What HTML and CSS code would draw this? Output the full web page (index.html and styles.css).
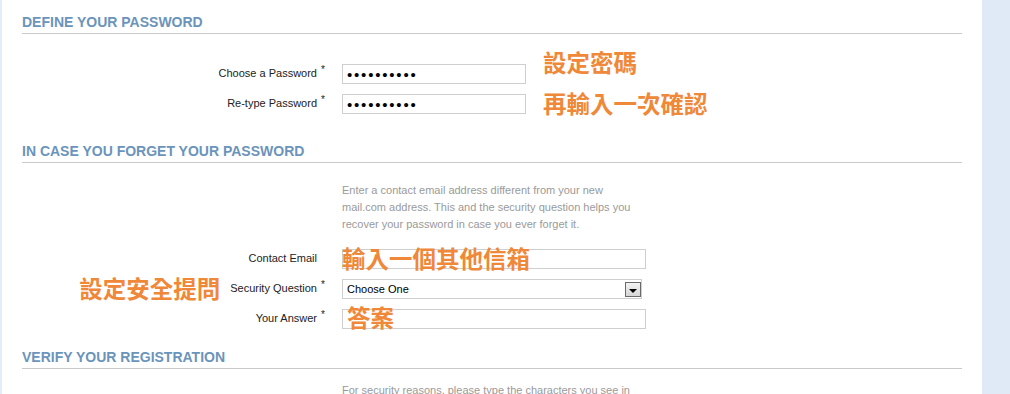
FILE: index.html
```html
<!DOCTYPE html>
<html lang="zh-Hant">
<head>
    <meta charset="UTF-8">
    <meta name="viewport" content="width=device-width, initial-scale=1.0">
    <title>Registration</title>
    <link rel="stylesheet" href="styles.css">
</head>
<body>
    <div class="page">
        <div class="edge"></div>
        <div class="main">
            <section class="block block-pw">
                <h2 class="block-title">DEFINE YOUR PASSWORD</h2>
                <div class="fields">
                    <div class="field">
                        <label class="field-label"><span>Choose a Password</span><span class="req">*</span></label>
                        <div class="control">
                            <input type="password" class="text text-short" value="abcdefghij">
                            <span class="note note-pw1">設定密碼</span>
                        </div>
                    </div>
                    <div class="field">
                        <label class="field-label"><span>Re-type Password</span><span class="req">*</span></label>
                        <div class="control">
                            <input type="password" class="text text-short" value="abcdefghij">
                            <span class="note note-pw2">再輸入一次確認</span>
                        </div>
                    </div>
                </div>
            </section>

            <section class="block block-recover">
                <h2 class="block-title">IN CASE YOU FORGET YOUR PASSWORD</h2>
                <p class="help">Enter a contact email address different from your new mail.com address. This and the security question helps you recover your password in case you ever forget it.</p>
                <div class="fields">
                    <div class="field">
                        <label class="field-label"><span>Contact Email</span><span class="req"></span></label>
                        <div class="control">
                            <input type="text" class="text text-long">
                            <span class="note note-in">輸入一個其他信箱</span>
                        </div>
                    </div>
                    <div class="field">
                        <label class="field-label"><span class="note-side">設定安全提問</span><span>Security Question</span><span class="req">*</span></label>
                        <div class="control">
                            <select class="choose">
                                <option>Choose One</option>
                            </select>
                            <span class="choose-btn"><i class="tri"></i></span>
                        </div>
                    </div>
                    <div class="field">
                        <label class="field-label"><span>Your Answer</span><span class="req">*</span></label>
                        <div class="control">
                            <input type="text" class="text text-long">
                            <span class="note note-in note-answer">答案</span>
                        </div>
                    </div>
                </div>
            </section>

            <section class="block block-verify">
                <h2 class="block-title">VERIFY YOUR REGISTRATION</h2>
                <p class="help help-verify">For security reasons, please type the characters you see in the picture below.</p>
            </section>
        </div>
        <div class="side"></div>
    </div>
</body>
</html>
```

FILE: styles.css
```css
body {
    margin: 0;
    font-family: 'Liberation Sans', Arial, sans-serif;
    background: #fff;
    color: #222;
}
.page {
    display: flex;
    height: 394px;
    overflow: hidden;
}
.edge {
    width: 2px;
    background: #e4edf7;
}
.side {
    width: 28px;
    background: #e0eaf6;
}
.main {
    flex: 1;
    padding: 0 20px 0 20px;
}
.block-pw {
    margin-bottom: 15px;
}
.block-recover {
    margin-bottom: 6px;
}
.block-title {
    margin: 0;
    padding: 14px 0 2px;
    font-size: 14px;
    line-height: 17px;
    font-weight: bold;
    color: #6b94bb;
    border-bottom: 1px solid #c9c9c9;
}
.fields {
    display: flex;
    flex-direction: column;
    gap: 10px;
}
.block-pw .fields {
    padding-top: 30px;
}
.field {
    display: grid;
    grid-template-columns: 304px 1fr;
    column-gap: 16px;
    align-items: center;
    height: 20px;
}
.field-label {
    display: flex;
    justify-content: flex-end;
    align-items: center;
    box-sizing: border-box;
    height: 20px;
    padding-bottom: 3px;
    font-size: 11px;
    color: #222;
}
.req {
    align-self: flex-start;
    width: 9px;
    padding-left: 4px;
    box-sizing: border-box;
    font-size: 10px;
    line-height: 11px;
    color: #222;
}
.control {
    position: relative;
    display: flex;
    align-items: center;
    height: 20px;
}
.text {
    box-sizing: border-box;
    height: 20px;
    margin: 0;
    padding: 0 4px;
    border: 1px solid #cfcfcf;
    background: #fff;
    font-family: 'Liberation Sans', Arial, sans-serif;
    font-size: 11px;
    outline: none;
}
.text-short {
    width: 184px;
}
.text-long {
    width: 304px;
}
input[type="password"] {
    font-size: 15px;
    letter-spacing: 1.8px;
    color: #000;
}
.choose {
    appearance: none;
    -webkit-appearance: none;
    box-sizing: border-box;
    width: 300px;
    height: 20px;
    margin: 0;
    padding: 0 4px;
    border: 1px solid #cfcfcf;
    border-radius: 0;
    background: #fff;
    font-family: 'Liberation Sans', Arial, sans-serif;
    font-size: 11px;
    color: #000;
}
.choose-btn {
    position: absolute;
    left: 283px;
    top: 3px;
    box-sizing: border-box;
    width: 16px;
    height: 15px;
    border: 1px solid #6a6a6a;
    background: linear-gradient(#f3f3f3, #d6d6d6);
    display: flex;
    align-items: center;
    justify-content: center;
    pointer-events: none;
}
.tri {
    width: 0;
    height: 0;
    margin-top: 2px;
    border-left: 4px solid transparent;
    border-right: 4px solid transparent;
    border-top: 4px solid #000;
}
.note,
.note-side {
    font-family: 'Noto Sans CJK TC', 'Noto Sans CJK SC', sans-serif;
    font-size: 23.5px;
    line-height: 24px;
    font-weight: bold;
    color: #ef8838;
    white-space: nowrap;
}
.note {
    position: absolute;
    pointer-events: none;
}
.note-pw1 {
    left: 201px;
    top: -14px;
}
.note-pw2 {
    left: 201px;
    top: -3px;
}
.note-in {
    left: 0;
    top: -3px;
}
.note-answer {
    left: 5px;
    top: -4px;
}
.note-side {
    margin-right: 10px;
}
.help {
    margin: 19px 0 16px 320px;
    width: 295px;
    font-size: 11px;
    line-height: 17px;
    color: #9a9a9a;
}
.help-verify {
    margin-top: 13px;
    width: 300px;
}
```
